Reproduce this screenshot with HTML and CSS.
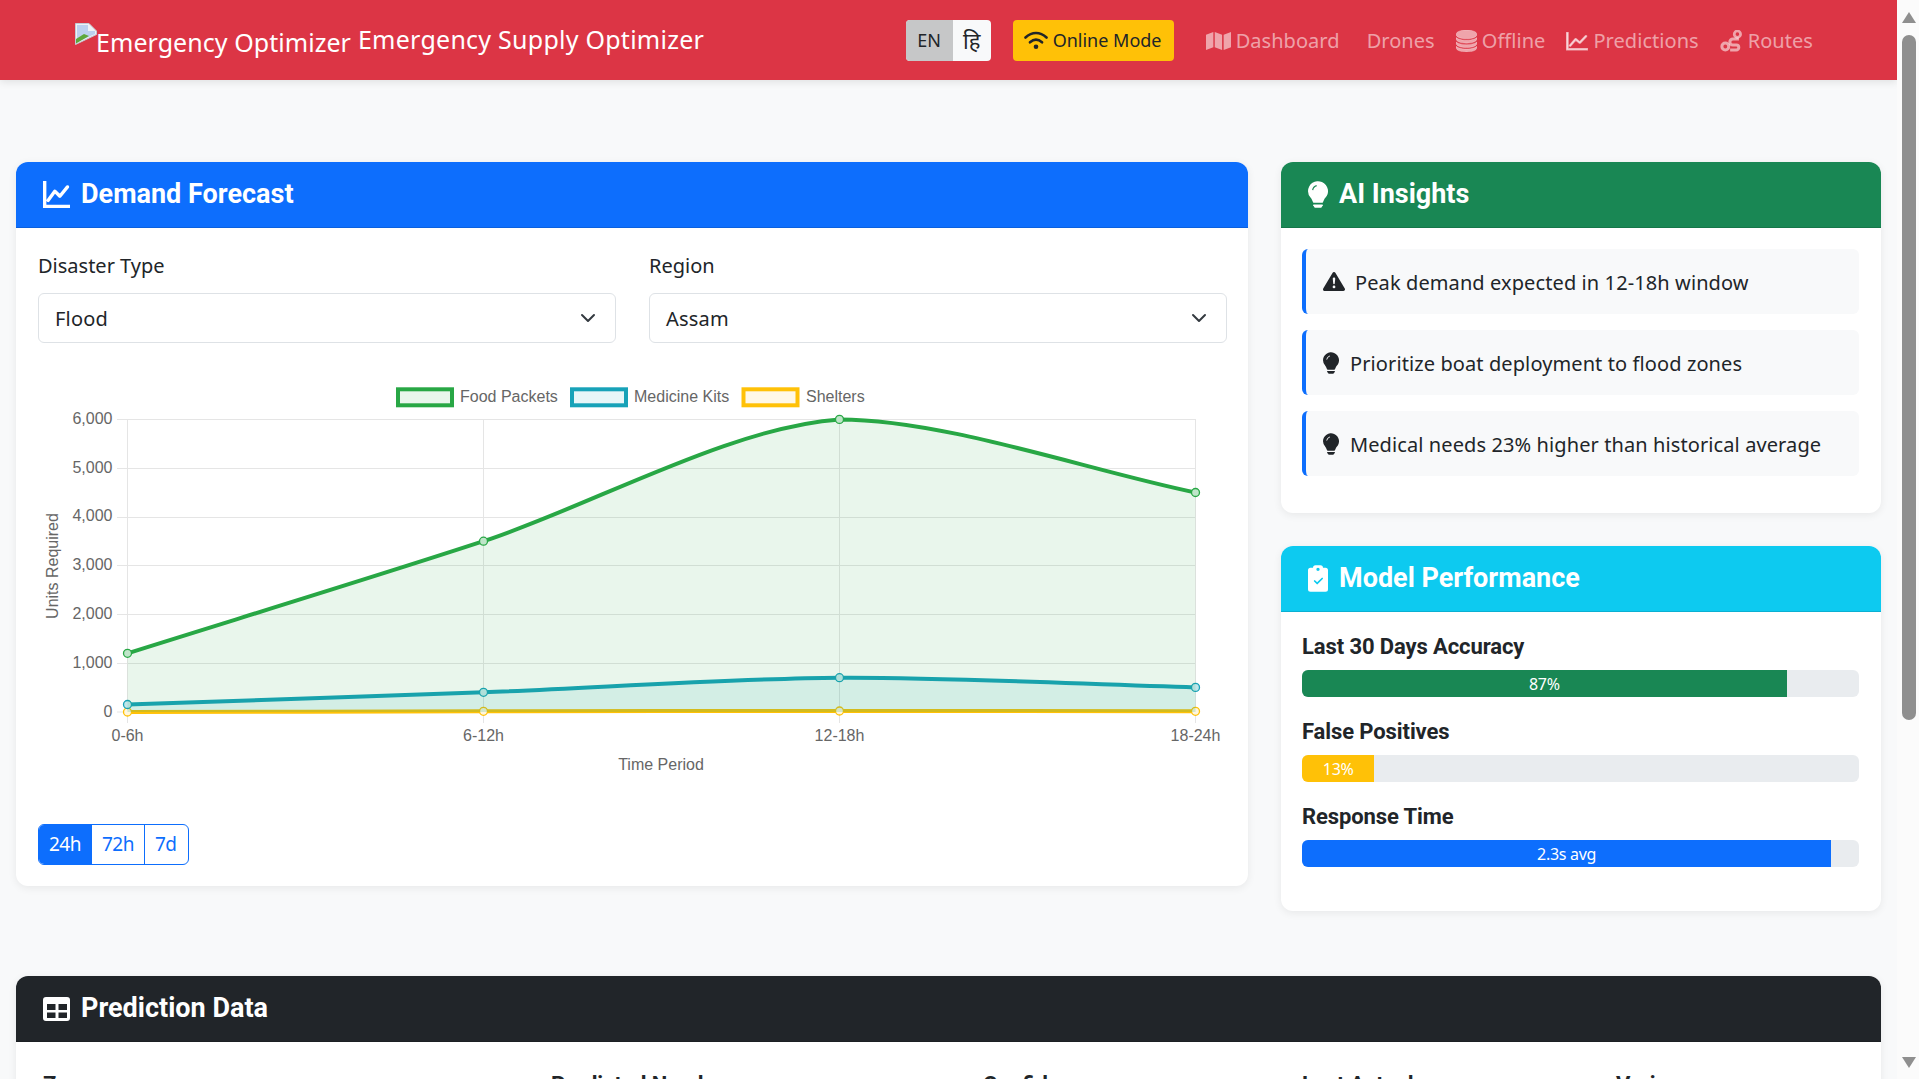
FILE: index.html
```html
<!DOCTYPE html>
<html lang="en">
<head>
  <meta charset="UTF-8">
  <title>Emergency Supply Optimizer</title>
  <link rel="stylesheet" href="styles.css">
</head>
<body>
<div class="page">
  <nav class="navbar">
    <div class="brand">
      <span class="logo-alt"><svg class="broken-img" viewBox="0 0 22 22"><path d="M.5.5H14L21.500 8v3.500L.5 21.500z" fill="#eef1f5" stroke="#c3cad4"/><path d="M2 2h11v6h7v3L2 19z" fill="#bcd0ef"/><path d="M1 20.500V16l8-5 5 2z" fill="#5da83b"/></svg>Emergency Optimizer</span>
      <span class="brand-name">Emergency Supply Optimizer</span>
    </div>
    <div class="nav-tools">
      <div class="lang-toggle"><span class="lang active">EN</span><span class="lang lang-hi">हि</span></div>
      <div class="mode-btn">
        <svg class="ico-wifi" viewBox="0 0 24 20"><path d="M1.500 7.500C8 1.500 16 1.500 22.500 7.500M6 12.300C10 8.800 14 8.800 18 12.300" fill="none" stroke="currentColor" stroke-width="2.600" stroke-linecap="round"/><circle cx="12" cy="16.800" r="2.300" fill="currentColor"/></svg>
        Online Mode
      </div>
      <ul class="nav-links">
        <li><svg class="ico-map" viewBox="0 0 16 16" preserveAspectRatio="none"><path fill="currentColor" d="M0 2.500 4.700 0v13.500L0 16zM5.600 0l4.700 2.500V16l-4.700-2.500zM11.300 2.500 16 0v13.500L11.300 16z"/></svg>Dashboard</li>
        <li class="no-icon">Drones</li>
        <li><svg class="ico-db" viewBox="2 1 12 15" preserveAspectRatio="none"><g fill="currentColor" stroke="currentColor" stroke-width=".3"><path d="M3.904 1.777C4.978 1.289 6.427 1 8 1s3.022.289 4.096.777C13.125 2.245 14 2.993 14 4s-.875 1.755-1.904 2.223C11.022 6.711 9.573 7 8 7s-3.022-.289-4.096-.777C2.875 5.755 2 5.007 2 4s.875-1.755 1.904-2.223"/><path d="M2 6.161V7c0 1.007.875 1.755 1.904 2.223C4.978 9.710 6.427 10 8 10s3.022-.289 4.096-.777C13.125 8.755 14 8.007 14 7v-.839c-.457.432-1.004.751-1.490.972C11.278 7.693 9.682 8 8 8s-3.278-.307-4.510-.867c-.486-.22-1.033-.54-1.490-.972"/><path d="M2 9.161V10c0 1.007.875 1.755 1.904 2.223C4.978 12.711 6.427 13 8 13s3.022-.289 4.096-.777C13.125 11.755 14 11.007 14 10v-.839c-.457.432-1.004.751-1.490.972-1.232.56-2.828.867-4.510.867s-3.278-.307-4.510-.867c-.486-.22-1.033-.54-1.490-.972"/><path d="M2 12.161V13c0 1.007.875 1.755 1.904 2.223C4.978 15.711 6.427 16 8 16s3.022-.289 4.096-.777C13.125 14.755 14 14.007 14 13v-.839c-.457.432-1.004.751-1.490.972-1.232.56-2.828.867-4.510.867s-3.278-.307-4.510-.867c-.486-.22-1.033-.54-1.490-.972"/></g></svg>Offline</li>
        <li><svg class="ico-graph" viewBox="0 0 16 16" preserveAspectRatio="none"><path fill="currentColor" stroke="currentColor" stroke-width="1" d="M.5.5h1v13.500h14v1H.5zm14.317 2.613a.5.5 0 0 1 .07.704l-4.500 5.500a.5.5 0 0 1-.74.037L7.060 6.767l-3.656 5.027a.5.5 0 0 1-.808-.588l4-5.500a.5.5 0 0 1 .758-.06l2.609 2.610 4.150-5.073a.5.5 0 0 1 .704-.07"/></svg>Predictions</li>
        <li><svg class="ico-route" viewBox="0 0 16 16"><circle cx="3.500" cy="12" r="2.500" fill="none" stroke="currentColor" stroke-width="2.200"/><circle cx="12.300" cy="3" r="2.300" fill="none" stroke="currentColor" stroke-width="2"/><path d="M12.300 5.500v1H9a2.200 2.200 0 0 0 0 4.400h2.500a1.800 1.800 0 0 1 0 3.600H7" fill="none" stroke="currentColor" stroke-width="2.200"/></svg>Routes</li>
      </ul>
    </div>
  </nav>

  <main class="content">
    <div class="top-row">
      <section class="card card-forecast">
        <header class="card-head head-blue">
          <svg class="head-ico" viewBox="0 0 16 16"><path fill="currentColor" stroke="currentColor" stroke-width="1" d="M.5.5h1v14h14v1H.5zm14.317 2.613a.5.5 0 0 1 .07.704l-4.500 5.500a.5.5 0 0 1-.74.037L7.060 6.767l-3.656 5.027a.5.5 0 0 1-.808-.588l4-5.500a.5.5 0 0 1 .758-.06l2.609 2.610 4.150-5.073a.5.5 0 0 1 .704-.07"/></svg>
          <h2>Demand Forecast</h2>
        </header>
        <div class="card-body forecast-body">
          <div class="filters">
            <div class="field">
              <label>Disaster Type</label>
              <div class="select"><span>Flood</span><svg viewBox="0 0 16 16"><path d="m2 5 6 6 6-6" fill="none" stroke="#343a40" stroke-width="2" stroke-linecap="round" stroke-linejoin="round"/></svg></div>
            </div>
            <div class="field">
              <label>Region</label>
              <div class="select"><span>Assam</span><svg viewBox="0 0 16 16"><path d="m2 5 6 6 6-6" fill="none" stroke="#343a40" stroke-width="2" stroke-linecap="round" stroke-linejoin="round"/></svg></div>
            </div>
          </div>

          <svg class="chart" viewBox="0 0 1188 430" width="1188" height="430">
            <!-- legend -->
            <g class="legend">
              <rect x="360" y="34.300" width="54" height="16" fill="#e9f6ec" stroke="#28a745" stroke-width="4"/>
              <text x="422" y="47">Food Packets</text>
              <rect x="534" y="34.300" width="54" height="16" fill="#e7f6f8" stroke="#17a2b8" stroke-width="4"/>
              <text x="596" y="47">Medicine Kits</text>
              <rect x="705.500" y="34.300" width="54" height="16" fill="#fff8e6" stroke="#ffc107" stroke-width="4"/>
              <text x="768" y="47">Shelters</text>
            </g>
            <!-- grid -->
            <g class="grid">
              <path d="M79 64.500H1158M79 113.500H1158M79 162.500H1158M79 210.500H1158M79 259.500H1158M79 308.500H1158M79 357H1158"/>
              <path d="M89.500 64V368M445.500 64V368M801.500 64V368M1157.500 64V368"/>
            </g>
            <!-- shelters, drawn first so the other fills lie over it -->
            <path class="line" stroke="#ffc107" d="M89.500 357C196 356.800 339 356.500 445.500 356.300C552 356.200 695 356 801.500 356C908 356 1051 356.200 1157.500 356.300"/>
            <g fill="#fff6dc" stroke="#ffc107" stroke-width="1.300">
              <circle cx="89.500" cy="357" r="4"/><circle cx="445.500" cy="356.300" r="4"/><circle cx="801.500" cy="356" r="4"/><circle cx="1157.500" cy="356.300" r="4"/>
            </g>
            <!-- medicine -->
            <path fill="rgba(23,162,184,.1)" d="M89.500 349.500C196.300 345.800 338.700 341.300 445.500 337.300C552.300 333.300 694.700 323.400 801.500 322.700C908.300 322 1050.700 329.500 1157.500 332.400V357H89.500Z"/>
            <path class="line" stroke="#17a2b8" d="M89.500 349.500C196.300 345.800 338.700 341.300 445.500 337.300C552.300 333.300 694.700 323.400 801.500 322.700C908.300 322 1050.700 329.500 1157.500 332.400"/>
            <g fill="#bfe6ea" stroke="#17a2b8" stroke-width="1.300">
              <circle cx="89.500" cy="349.500" r="4"/><circle cx="445.500" cy="337.300" r="4"/><circle cx="801.500" cy="322.700" r="4"/><circle cx="1157.500" cy="332.400" r="4"/>
            </g>
            <!-- food -->
            <path fill="rgba(40,167,69,.1)" d="M89.500 298.300C196.300 264.700 339.100 221.100 445.500 186.200C552.700 151 692.800 71.800 801.500 64.400C906.400 64.400 1050.700 115.600 1157.500 137.500V357H89.500Z"/>
            <path class="line" stroke="#28a745" d="M89.500 298.300C196.300 264.700 339.100 221.100 445.500 186.200C552.700 151 692.800 71.800 801.500 64.400C906.400 64.400 1050.700 115.600 1157.500 137.500"/>
            <g fill="#bfe5c9" stroke="#28a745" stroke-width="1.300">
              <circle cx="89.500" cy="298.300" r="4"/><circle cx="445.500" cy="186.200" r="4"/><circle cx="801.500" cy="64.400" r="4"/><circle cx="1157.500" cy="137.500" r="4"/>
            </g>
            <!-- axis labels -->
            <g class="ticks">
              <text class="y" x="74.500" y="69">6,000</text>
              <text class="y" x="74.500" y="118">5,000</text>
              <text class="y" x="74.500" y="166">4,000</text>
              <text class="y" x="74.500" y="215">3,000</text>
              <text class="y" x="74.500" y="264">2,000</text>
              <text class="y" x="74.500" y="313">1,000</text>
              <text class="y" x="74.500" y="362">0</text>
              <text class="x" x="89.500" y="386">0-6h</text>
              <text class="x" x="445.500" y="386">6-12h</text>
              <text class="x" x="801.500" y="386">12-18h</text>
              <text class="x" x="1157.500" y="386">18-24h</text>
              <text class="x" x="623" y="415">Time Period</text>
              <text class="x" transform="translate(19.500 211) rotate(-90)">Units Required</text>
            </g>
          </svg>

          <div class="btn-group">
            <span class="range active">24h</span><span class="range">72h</span><span class="range">7d</span>
          </div>
        </div>
      </section>

      <div class="side-col">
        <section class="card">
          <header class="card-head head-green">
            <svg class="head-ico narrow" viewBox="2 0 12 16"><path fill="currentColor" d="M2 6a6 6 0 1 1 10.174 4.310c-.203.196-.359.4-.453.619l-.762 1.769A.5.5 0 0 1 10.500 13h-5a.5.5 0 0 1-.46-.302l-.761-1.770a2 2 0 0 0-.453-.618A5.980 5.980 0 0 1 2 6m3 8.500a.5.5 0 0 1 .5-.5h5a.5.5 0 0 1 0 1l-.224.447a1 1 0 0 1-.894.553H6.618a1 1 0 0 1-.894-.553L5.500 15a.5.5 0 0 1-.5-.5"/><path d="M4.800 5.400A3.300 3.300 0 0 1 7.200 2.700" fill="none" stroke="#198754" stroke-width=".7"/></svg>
            <h2>AI Insights</h2>
          </header>
          <div class="card-body insights">
            <div class="insight">
              <svg class="ico-warn" viewBox="0 1 16 14" preserveAspectRatio="none"><path fill="currentColor" d="M8.982 1.566a1.130 1.130 0 0 0-1.960 0L.165 13.233c-.457.778.091 1.767.98 1.767h13.713c.889 0 1.438-.99.98-1.767zM8 5c.535 0 .954.462.9.995l-.35 3.507a.552.552 0 0 1-1.100 0L7.100 5.995A.905.905 0 0 1 8 5m.002 6a1 1 0 1 1 0 2 1 1 0 0 1 0-2"/></svg>
              <span>Peak demand expected in 12-18h window</span>
            </div>
            <div class="insight">
              <svg class="ico-bulb" viewBox="2 0 12 16"><path fill="currentColor" d="M2 6a6 6 0 1 1 10.174 4.310c-.203.196-.359.4-.453.619l-.762 1.769A.5.5 0 0 1 10.500 13h-5a.5.5 0 0 1-.46-.302l-.761-1.770a2 2 0 0 0-.453-.618A5.980 5.980 0 0 1 2 6m3 8.500a.5.5 0 0 1 .5-.5h5a.5.5 0 0 1 0 1l-.224.447a1 1 0 0 1-.894.553H6.618a1 1 0 0 1-.894-.553L5.500 15a.5.5 0 0 1-.5-.5"/><path d="M4.800 5.400A3.300 3.300 0 0 1 7.200 2.700" fill="none" stroke="#f8f9fa" stroke-width=".7"/></svg>
              <span>Prioritize boat deployment to flood zones</span>
            </div>
            <div class="insight">
              <svg class="ico-bulb" viewBox="2 0 12 16"><path fill="currentColor" d="M2 6a6 6 0 1 1 10.174 4.310c-.203.196-.359.4-.453.619l-.762 1.769A.5.5 0 0 1 10.500 13h-5a.5.5 0 0 1-.46-.302l-.761-1.770a2 2 0 0 0-.453-.618A5.980 5.980 0 0 1 2 6m3 8.500a.5.5 0 0 1 .5-.5h5a.5.5 0 0 1 0 1l-.224.447a1 1 0 0 1-.894.553H6.618a1 1 0 0 1-.894-.553L5.500 15a.5.5 0 0 1-.5-.5"/><path d="M4.800 5.400A3.300 3.300 0 0 1 7.200 2.700" fill="none" stroke="#f8f9fa" stroke-width=".7"/></svg>
              <span>Medical needs 23% higher than historical average</span>
            </div>
          </div>
        </section>

        <section class="card">
          <header class="card-head head-cyan">
            <svg class="head-ico narrow" viewBox="2 0 12 16"><path fill="currentColor" fill-rule="evenodd" d="M6.500 0A1.500 1.500 0 0 0 5 1.500H3.500A1.500 1.500 0 0 0 2 3v11.500A1.500 1.500 0 0 0 3.500 16h9a1.500 1.500 0 0 0 1.500-1.500V3a1.500 1.500 0 0 0-1.500-1.500H11A1.500 1.500 0 0 0 9.500 0zM8 1.500a1 1 0 1 1 0 2 1 1 0 0 1 0-2m2.854 6.854-3 3a.5.5 0 0 1-.708 0l-1.500-1.500a.5.5 0 1 1 .708-.708L7.500 10.293l2.646-2.647a.5.5 0 0 1 .708.708"/></svg>
            <h2>Model Performance</h2>
          </header>
          <div class="card-body metrics">
            <h3>Last 30 Days Accuracy</h3>
            <div class="progress"><div class="bar bar-green" style="width: 87%">87%</div></div>
            <h3>False Positives</h3>
            <div class="progress"><div class="bar bar-yellow" style="width: 13%">13%</div></div>
            <h3>Response Time</h3>
            <div class="progress"><div class="bar bar-blue" style="width: 95%">2.3s avg</div></div>
          </div>
        </section>
      </div>
    </div>

    <section class="card card-table">
      <header class="card-head head-dark">
        <svg class="head-ico grid-ico" viewBox="0 0 27 24"><path fill="currentColor" fill-rule="evenodd" d="M3 0h21a3 3 0 0 1 3 3v18a3 3 0 0 1-3 3H3a3 3 0 0 1-3-3V3a3 3 0 0 1 3-3M4 7v6h8.500V7zm11.500 0v6H24V7zM4 15.500V21h8.500v-5.500zm11.500 0V21H24v-5.500z"/></svg>
        <h2>Prediction Data</h2>
      </header>
      <div class="card-body">
        <table class="data-table">
          <thead>
            <tr><th class="col-a">Zone</th><th class="col-b">Predicted Need</th><th class="col-c">Confidence</th><th class="col-d">Last Actual</th><th>Variance</th></tr>
          </thead>
        </table>
      </div>
    </section>
  </main>
</div>
<div class="scrollbar">
  <span class="arrow-up"></span>
  <div class="track"><div class="thumb"></div></div>
  <span class="arrow-down"></span>
</div>
</body>
</html>
```

FILE: styles.css
```css
* {
  box-sizing: border-box;
}
html, body {
  height: 1079px;
  margin: 0;
  overflow: hidden;
}
body {
  display: flex;
  background-color: #f8f9fa;
  color: #212529;
  font-family: "Noto Sans", "Open Sans", sans-serif;
  font-size: 20px;
  line-height: 1.5;
}
.page {
  flex: 1;
  min-width: 0;
  height: 1079px;
  overflow: hidden;
}

/* navbar */
.navbar {
  height: 80px;
  background-color: #dc3545;
  box-shadow: 0 2px 8px rgba(0, 0, 0, .1);
  display: flex;
  justify-content: space-between;
  align-items: center;
  padding: 0 84px 0 75px;
  position: relative;
}
.brand {
  display: flex;
  align-items: center;
  color: #fff;
  gap: 7px;
}
.logo-alt {
  font-size: 25px;
  letter-spacing: .05px;
  position: relative;
  padding-left: 21px;
  top: 3px;
}
.broken-img {
  position: absolute;
  left: 0;
  top: -1px;
  width: 22px;
  height: 22px;
}
.brand-name {
  font-size: 25px;
  letter-spacing: .25px;
}
.nav-tools {
  display: flex;
  align-items: center;
}
.lang-toggle {
  display: flex;
  width: 85px;
  height: 41px;
  border-radius: 4px;
  overflow: hidden;
  background: #f8f9fa;
  margin-right: 22px;
  font-size: 18px;
}
.lang {
  flex: 1;
  text-align: center;
  line-height: 41px;
}
.lang-hi {
  font-size: 22px;
}
.lang.active {
  flex: 0 0 47px;
  background: #c6c7c8;
}
.mode-btn {
  display: flex;
  align-items: center;
  gap: 5px;
  height: 41px;
  padding: 0 11px;
  width: 161px;
  background: #ffc107;
  border-radius: 4px;
  font-size: 18px;
  white-space: nowrap;
}
.ico-wifi {
  width: 24px;
  height: 20px;
  flex: none;
}
.nav-links {
  display: flex;
  list-style: none;
  margin: 2px 0 0 32px;
  padding: 0;
  color: rgba(255, 255, 255, .55);
  font-size: 20px;
  letter-spacing: .05px;
  gap: 21px;
}
.nav-links li {
  display: flex;
  align-items: center;
  gap: 5px;
  white-space: nowrap;
}
.nav-links .no-icon {
  margin-left: 6px;
}
.ico-map { width: 25px; height: 18px; }
.ico-db { width: 21px; height: 22px; }
.ico-graph { width: 22px; height: 19px; }
.ico-route { width: 23px; height: 22px; }

/* cards */
.content {
  padding: 82px 16px 0;
}
.top-row {
  display: flex;
  align-items: flex-start;
  gap: 33px;
  margin-bottom: 65px;
}
.card {
  background: #fff;
  border-radius: 12px;
  box-shadow: 0 2px 8px rgba(0, 0, 0, .07);
  overflow: hidden;
}
.card-forecast {
  flex: 0 0 1232px;
}
.side-col {
  flex: 1;
  min-width: 0;
  display: flex;
  flex-direction: column;
  gap: 33px;
}
.card-head {
  height: 66px;
  display: flex;
  align-items: center;
  padding: 0 22px 0 27px;
  gap: 11px;
  color: #fff;
  border-bottom: 1px solid rgba(0, 0, 0, .125);
}
.card-head h2 {
  margin: 0;
  font-family: Roboto, sans-serif;
  font-size: 27px;
  font-weight: 700;
}
.head-ico {
  width: 27px;
  height: 27px;
  flex: none;
}
.head-ico.narrow {
  width: 20px;
  height: 27px;
}
.head-ico.grid-ico {
  height: 24px;
}
.head-blue { background: #0d6efd; }
.head-green { background: #198754; }
.head-cyan { background: #0dcaf0; }
.head-dark { background: #212529; }
.card-body {
  padding: 22px;
}

/* forecast */
.forecast-body {
  padding: 23px 22px 21px;
}
.filters {
  display: flex;
  gap: 33px;
  margin-right: -1px;
}
.field {
  flex: 1;
}
.field label {
  display: block;
  margin-bottom: 12px;
}
.select {
  height: 50px;
  display: flex;
  align-items: center;
  justify-content: space-between;
  padding: 0 19px 0 16px;
  border: 1px solid #dee2e6;
  border-radius: 6px;
  letter-spacing: .2px;
}
.select span {
  padding-top: 2px;
}
.select svg {
  width: 16px;
  height: 16px;
}
.chart {
  display: block;
  margin-top: 12px;
  font-family: "Liberation Sans", Arial, sans-serif;
  font-size: 16px;
  fill: #666;
}
.grid path {
  fill: none;
  stroke: #e5e5e5;
  stroke-width: 1;
}
.line {
  fill: none;
  stroke-width: 4;
}
.ticks .y {
  text-anchor: end;
}
.ticks .x {
  text-anchor: middle;
}
.btn-group {
  display: inline-flex;
  vertical-align: top;
  height: 41px;
  margin-top: 39px;
  border: 1px solid #0d6efd;
  border-radius: 6px;
  overflow: hidden;
  color: #0d6efd;
  font-size: 19px;
  letter-spacing: -.5px;
}
.range {
  display: flex;
  align-items: center;
  padding: 0 10px;
  border-left: 1px solid #0d6efd;
}
.range:first-child {
  border-left: 0;
}
.range:last-child {
  padding-right: 11px;
}
.range.active {
  background: #0d6efd;
  color: #fff;
}

/* insights */
.insights {
  padding: 21px 22px 37px 21px;
}
.insight {
  display: flex;
  align-items: center;
  height: 65px;
  margin-bottom: 16px;
  padding-left: 17px;
  background: #f8f9fa;
  border-left: 4px solid #0d6efd;
  border-radius: 6px;
  letter-spacing: .1px;
}
.insight:last-child {
  margin-bottom: 0;
}
.insight span {
  padding-top: 2px;
}
.ico-warn {
  width: 22px;
  height: 19px;
  margin-right: 10px;
  flex: none;
}
.ico-bulb {
  width: 16px;
  height: 22px;
  margin-right: 11px;
  flex: none;
}

/* metrics */
.metrics {
  padding: 20px 22px 44px 21px;
}
.metrics h3 {
  margin: 0 0 8px;
  font-family: Roboto, sans-serif;
  font-size: 22px;
  font-weight: 700;
  line-height: 30px;
  letter-spacing: -.1px;
}
.progress {
  height: 27px;
  background: #e9ecef;
  border-radius: 6px;
  overflow: hidden;
  margin-bottom: 20px;
}
.progress:last-child {
  margin-bottom: 0;
}
.bar {
  height: 100%;
  color: #fff;
  text-align: center;
  font-size: 16px;
  line-height: 28px;
  letter-spacing: -.3px;
}
.bar-green { background: #198754; }
.bar-yellow { background: #ffc107; }
.bar-blue { background: #0d6efd; }

/* table */
.data-table {
  width: 100%;
  border-collapse: collapse;
  text-align: left;
}
.data-table th {
  padding: 6px 5px;
  font-size: 22px;
  line-height: 30px;
  font-family: Roboto, sans-serif;
}
.col-a { width: 508px; }
.col-b { width: 432px; }
.col-c { width: 319px; }
.col-d { width: 314px; }

/* scrollbar */
.scrollbar {
  flex: 0 0 22px;
  height: 1079px;
  padding: 12px 0 11px 5px;
  background: #fbfbfb;
  display: flex;
  flex-direction: column;
}
.arrow-up, .arrow-down {
  flex: none;
  width: 0;
  height: 0;
  border-left: 7px solid transparent;
  border-right: 7px solid transparent;
}
.arrow-up {
  border-bottom: 11px solid #8f8f8f;
}
.arrow-down {
  border-top: 11px solid #8f8f8f;
}
.track {
  flex: 1;
}
.thumb {
  width: 14px;
  height: 685px;
  margin-top: 12px;
  background: #8f8f8f;
  border-radius: 7px;
}
```
